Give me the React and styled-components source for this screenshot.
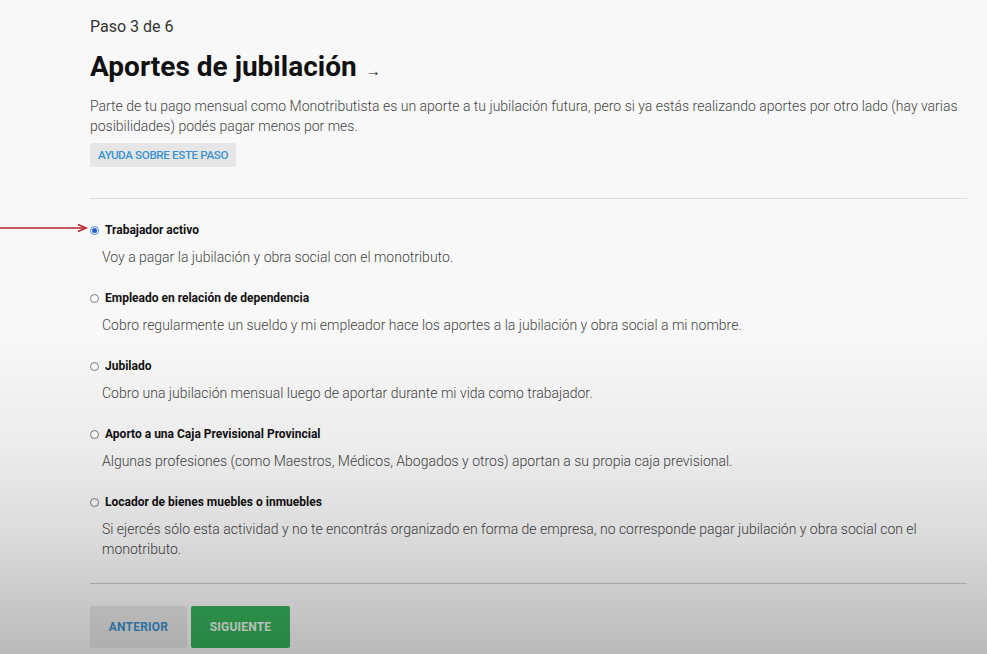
import React, { useState } from "react";
import styled, { createGlobalStyle } from "styled-components";

const Global = createGlobalStyle`
  html, body { margin: 0; padding: 0; }
  body {
    background: #f8f8f8;
    font-family: Roboto, "Liberation Sans", Arial, sans-serif;
    color: #333;
    overflow: hidden;
  }
`;

const Page = styled.div`
  position: relative;
  width: 987px;
  height: 654px;
  box-sizing: border-box;
  padding: 17px 20px 0 90px;
  display: flex;
  flex-direction: column;
`;

const Shade = styled.div`
  position: absolute;
  inset: 0;
  pointer-events: none;
  background: linear-gradient(
    to bottom,
    rgba(0, 0, 0, 0) 0px,
    rgba(0, 0, 0, 0) 330px,
    rgba(0, 0, 0, 0.05) 450px,
    rgba(0, 0, 0, 0.12) 540px,
    rgba(0, 0, 0, 0.25) 654px
  );
`;

const Step = styled.div`
  font-size: 16px;
  line-height: 20px;
  color: #333;
`;

const Title = styled.h1`
  margin: 13px 0 0;
  font-size: 28px;
  line-height: 34px;
  font-weight: 700;
  color: #111;
  display: flex;
  align-items: baseline;
  gap: 9px;
`;

const TitleArrow = styled.span`
  font-size: 15px;
  font-weight: 300;
  color: #222;
`;

const Lead = styled.p`
  margin: 8px 0 0;
  font-size: 14px;
  line-height: 20px;
  color: #444;
  font-weight: 300;
`;

const HelpButton = styled.button`
  align-self: flex-start;
  margin-top: 7px;
  height: 24px;
  padding: 0 8px;
  border: none;
  border-radius: 2px;
  background: #e6e6e6;
  color: #3a93d4;
  font-family: Roboto, "Liberation Sans", sans-serif;
  font-size: 11.6px;
  font-weight: 500;
  letter-spacing: -0.35px;
  cursor: pointer;
`;

const Rule = styled.hr`
  margin: ${(p) => p.$top}px 0 0;
  border: none;
  border-top: 1px solid ${(p) => p.$color || "#dcdcdc"};
  height: 0;
`;

const Options = styled.div`
  display: flex;
  flex-direction: column;
  gap: 23px;
  margin-top: 23px;
`;

const Option = styled.label`
  display: flex;
  flex-direction: column;
  gap: 9px;
  cursor: pointer;
`;

const OptionHead = styled.div`
  display: flex;
  align-items: center;
  gap: 6px;
  height: 16px;
`;

const Radio = styled.span`
  width: 9px;
  height: 9px;
  box-sizing: border-box;
  border-radius: 50%;
  border: 1px solid ${(p) => (p.$checked ? "#4a86d9" : "#7a7a7a")};
  background: #fff;
  display: flex;
  align-items: center;
  justify-content: center;
  flex: none;
  &::after {
    content: "";
    width: 5px;
    height: 5px;
    border-radius: 50%;
    background: ${(p) => (p.$checked ? "#1f5fcf" : "transparent")};
  }
`;

const OptionLabel = styled.span`
  font-size: 12px;
  font-weight: 700;
  color: #111;
  line-height: 16px;
`;

const OptionDesc = styled.div`
  padding-left: 12px;
  font-size: 14px;
  font-weight: 300;
  line-height: 20px;
  color: #444;
  max-width: 820px;
`;

const Actions = styled.div`
  display: flex;
  gap: 4px;
  margin-top: 22px;
`;

const ActionButton = styled.button`
  height: 42px;
  width: ${(p) => p.$w}px;
  border: none;
  border-radius: 2px;
  background: ${(p) => (p.$primary ? "#36b05a" : "#e6e6e6")};
  color: ${(p) => (p.$primary ? "#e8f5ec" : "#3a8fd0")};
  font-family: Roboto, "Liberation Sans", sans-serif;
  font-size: 12px;
  font-weight: 700;
  letter-spacing: 0.2px;
  cursor: pointer;
`;

const Pointer = styled.svg`
  position: absolute;
  left: 0;
  top: 222px;
`;

const OPTIONS = [
  {
    label: "Trabajador activo",
    desc: "Voy a pagar la jubilación y obra social con el monotributo.",
  },
  {
    label: "Empleado en relación de dependencia",
    desc: "Cobro regularmente un sueldo y mi empleador hace los aportes a la jubilación y obra social a mi nombre.",
  },
  {
    label: "Jubilado",
    desc: "Cobro una jubilación mensual luego de aportar durante mi vida como trabajador.",
  },
  {
    label: "Aporto a una Caja Previsional Provincial",
    desc: "Algunas profesiones (como Maestros, Médicos, Abogados y otros) aportan a su propia caja previsional.",
  },
  {
    label: "Locador de bienes muebles o inmuebles",
    desc: "Si ejercés sólo esta actividad y no te encontrás organizado en forma de empresa, no corresponde pagar jubilación y obra social con el monotributo.",
  },
];

export default function App() {
  const [selected, setSelected] = useState(0);
  return (
    <Page>
      <Global />
      <Step>Paso 3 de 6</Step>
      <Title>
        Aportes de jubilación <TitleArrow>→</TitleArrow>
      </Title>
      <Lead>
        Parte de tu pago mensual como Monotributista es un aporte a tu jubilación futura, pero si ya estás
        realizando aportes por otro lado (hay varias posibilidades) podés pagar menos por mes.
      </Lead>
      <HelpButton>AYUDA SOBRE ESTE PASO</HelpButton>
      <Rule $top={31} />
      <Options>
        {OPTIONS.map((o, i) => (
          <Option key={o.label} onClick={() => setSelected(i)}>
            <OptionHead>
              <Radio $checked={selected === i} />
              <OptionLabel>{o.label}</OptionLabel>
            </OptionHead>
            <OptionDesc>{o.desc}</OptionDesc>
          </Option>
        ))}
      </Options>
      <Rule $top={24} $color="#c9c9c9" />
      <Actions>
        <ActionButton $w={97}>ANTERIOR</ActionButton>
        <ActionButton $w={99} $primary>
          SIGUIENTE
        </ActionButton>
      </Actions>
      <Shade />
      <Pointer width="90" height="12" viewBox="0 0 90 12">
        <line x1="0" y1="6" x2="84" y2="6" stroke="#b3262c" strokeWidth="1.4" />
        <path d="M78 2.5 L86 6 L78 9.5" fill="none" stroke="#b3262c" strokeWidth="1.6" strokeLinejoin="miter" />
      </Pointer>
    </Page>
  );
}
